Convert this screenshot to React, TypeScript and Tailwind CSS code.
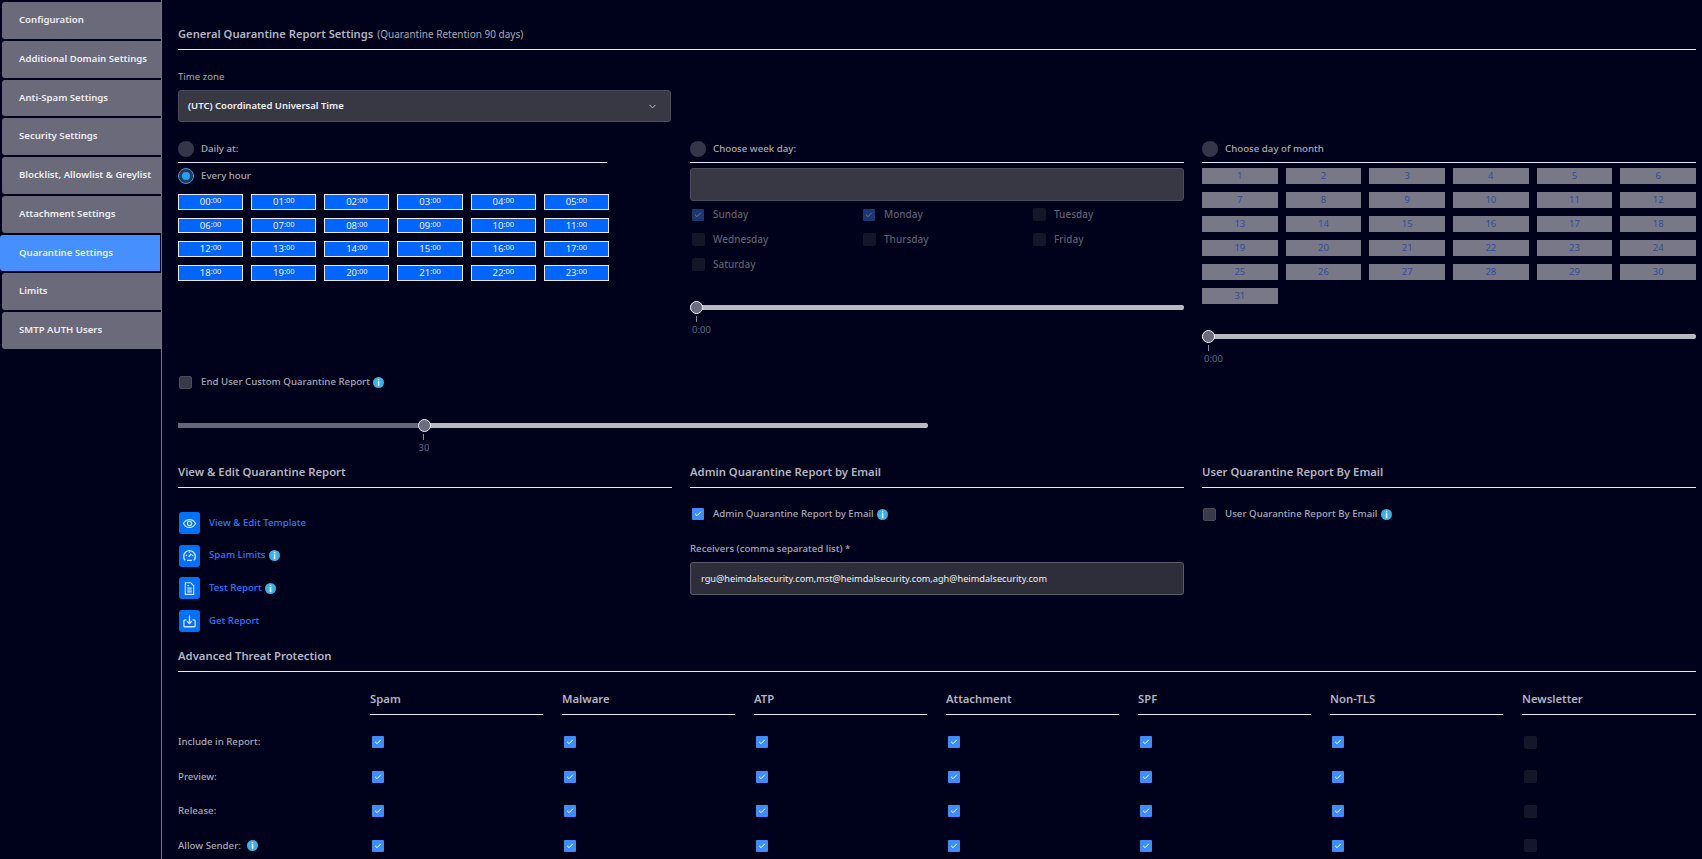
import { Check, ChevronDown } from "lucide-react";
import type { ReactNode } from "react";

const NAV = [
  "Configuration",
  "Additional Domain Settings",
  "Anti-Spam Settings",
  "Security Settings",
  "Blocklist, Allowlist & Greylist",
  "Attachment Settings",
  "Quarantine Settings",
  "Limits",
  "SMTP AUTH Users",
];

const HOURS = Array.from({ length: 24 }, (_, i) => String(i).padStart(2, "0"));
const DAYS = Array.from({ length: 31 }, (_, i) => i + 1);
const WEEK = [
  { name: "Sunday", on: true },
  { name: "Monday", on: true },
  { name: "Tuesday", on: false },
  { name: "Wednesday", on: false },
  { name: "Thursday", on: false },
  { name: "Friday", on: false },
  { name: "Saturday", on: false },
];
const COLUMNS = ["Spam", "Malware", "ATP", "Attachment", "SPF", "Non-TLS", "Newsletter"];
const ROWS = ["Include in Report:", "Preview:", "Release:", "Allow Sender:"];

function Info() {
  return (
    <svg viewBox="0 0 11 11" className="w-[11px] h-[11px] shrink-0">
      <circle cx="5.5" cy="5.5" r="5.5" fill="#3bb2e2" />
      <rect x="4.8" y="1.8" width="1.5" height="1.5" fill="#fff" />
      <rect x="4.8" y="4.2" width="1.5" height="5" fill="#fff" />
    </svg>
  );
}

function Heading({ children }: { children: ReactNode }) {
  return (
    <div className="h-[33px] flex items-end pb-[6px] border-b border-[#e8e8ee] text-[11.3px] leading-[18px] font-semibold text-[#b4b4c0]">
      {children}
    </div>
  );
}

function Radio({ on }: { on?: boolean }) {
  if (on) {
    return (
      <span className="w-[16px] h-[16px] rounded-full border border-[#2a9df4] bg-[#33334a] flex items-center justify-center">
        <span className="w-[8px] h-[8px] rounded-full bg-[#20a0ff]" />
      </span>
    );
  }
  return <span className="w-[16px] h-[16px] rounded-full bg-[#36364a]" />;
}

function RadioHead({ label, on }: { label: string; on?: boolean }) {
  return (
    <div className="flex items-center h-[16px]">
      <Radio on={on} />
      <span className="ml-[7px] text-[9.7px] font-medium text-[#a9a9b6]">{label}</span>
    </div>
  );
}

function Box({ kind }: { kind: "on" | "off" | "dimOn" | "dimOff" }) {
  if (kind === "on") {
    return (
      <span className="w-[12px] h-[12px] rounded-[1px] bg-[#3f8cff] flex items-center justify-center">
        <Check className="w-[8px] h-[8px] text-white" strokeWidth={3} />
      </span>
    );
  }
  if (kind === "dimOn") {
    return (
      <span className="w-[12px] h-[12px] rounded-[1px] bg-[#1c3672] flex items-center justify-center">
        <Check className="w-[8px] h-[8px] text-[#7c86a0]" strokeWidth={2.5} />
      </span>
    );
  }
  if (kind === "dimOff") {
    return <span className="block w-[13px] h-[13px] rounded-[2px] bg-[#14162a]" />;
  }
  return <span className="block w-[13px] h-[13px] rounded-[2px] bg-[#3a3a4a] border border-[#4a4a5a]" />;
}

function Slider({ percent, label }: { percent: number; label: string }) {
  return (
    <div>
      <div className="relative h-[14px] flex items-center">
        <div className="w-full h-[5px] rounded-[2px] bg-[#b9b9c2]" />
        {percent > 0 && (
          <div className="absolute left-0 h-[5px] bg-[#64647a]" style={{ width: `${percent}%` }} />
        )}
        <div
          className="absolute top-[1px] w-[13px] h-[13px] rounded-full bg-[#6c6c80] border border-[#f0f0f4]"
          style={percent > 0 ? { left: `calc(${percent}% - 6px)` } : { left: 0 }}
        />
      </div>
      <div
        style={percent > 0 ? { marginLeft: `calc(${percent}% - 7px)` } : undefined}
        className={percent > 0 ? "w-[14px] flex flex-col items-center" : "w-[14px] flex flex-col items-start"}
      >
        <span className={`mt-[2px] w-px h-[6px] bg-[#8a8a96] ${percent > 0 ? "" : "ml-[6px]"}`} />
        <span className={`mt-[1px] text-[9.5px] leading-[14px] text-[#5d6888] whitespace-nowrap ${percent > 0 ? "" : "ml-[2px]"}`}>
          {label}
        </span>
      </div>
    </div>
  );
}

function LinkRow({ icon, label, info }: { icon: ReactNode; label: string; info?: boolean }) {
  return (
    <div className="flex items-center h-[22px] ml-[1px]">
      <span className="w-[21px] h-[22px] rounded-[3px] bg-[#0070ff] flex items-center justify-center text-[#d4e5ff]">{icon}</span>
      <span className="ml-[9px] mr-[3px] text-[9.7px] font-medium text-[#2f7bff]">{label}</span>
      {info && <Info />}
    </div>
  );
}

export default function App() {
  return (
    <div className="flex h-[859px] overflow-hidden bg-[#00011a] font-['Noto_Sans',sans-serif]">
      {/* sidebar */}
      <div className="w-[162px] shrink-0 border-r border-[#3f7fe0] pt-[2px] flex flex-col gap-[2px]">
        {NAV.map((item) => {
          const active = item === "Quarantine Settings";
          return (
            <div
              key={item}
              className={`h-[36.75px] flex items-center text-[9.6px] font-semibold text-[#eeeef4] rounded-l-[3px] ${
                active ? "bg-[#458fff] pl-[19px] mr-[1px]" : "bg-[#6a6a7a] ml-[2px] pl-[17px]"
              }`}
            >
              {item}
            </div>
          );
        })}
      </div>

      {/* content */}
      <div className="flex-1 pl-[16px] pr-[6px]">
        <div className="h-[50px] flex items-end pb-[6px] border-b border-[#e8e8ee] leading-[18px] text-[11.2px] font-semibold text-[#b4b4c0]">
          General Quarantine Report Settings
          <span className="ml-[4px] text-[10px] font-normal text-[#a9a9b6]">(Quarantine Retention 90 days)</span>
        </div>

        <div className="mt-[19px] text-[9.6px] leading-[16px] text-[#a9a9b6]">Time zone</div>
        <div className="mt-[5px] w-[493px] h-[32px] rounded-[3px] bg-[#383844] border border-[#4c4c5a] flex items-center justify-between pl-[9px] pr-[12px] text-[9.5px] font-semibold text-[#f0f0f4]">
          (UTC) Coordinated Universal Time
          <ChevronDown className="w-[11px] h-[11px] text-[#c8c8d0]" />
        </div>

        {/* schedule */}
        <div className="mt-[19px] grid grid-cols-3 gap-x-[18px] h-[226px]">
          <div className="w-[431px]">
            <div className="pb-[5px] border-b border-[#e8e8ee] w-[429px]">
              <RadioHead label="Daily at:" />
            </div>
            <div className="mt-[5px]">
              <RadioHead label="Every hour" on />
            </div>
            <div className="mt-[10px] grid grid-cols-6 gap-x-[8px] gap-y-[8px]">
              {HOURS.map((h) => (
                <div
                  key={h}
                  className="h-[15.7px] bg-[#0066ff] border border-[#e8e8ee] flex items-start justify-center text-[9.5px] leading-[14px] text-[#f0f0f6]"
                >
                  {h}
                  <span className="text-[7.5px] leading-[11px]">:00</span>
                </div>
              ))}
            </div>
          </div>

          <div>
            <div className="pb-[5px] border-b border-[#e8e8ee]">
              <RadioHead label="Choose week day:" />
            </div>
            <div className="mt-[5px] h-[33px] rounded-[3px] bg-[#383844] border border-[#4c4c5a]" />
            <div className="mt-[1px] grid grid-cols-[171px_170px_1fr] pl-[2px]">
              {WEEK.map((d) => (
                <div key={d.name} className="h-[25px] flex items-center">
                  <span className="w-[21px]">
                    <Box kind={d.on ? "dimOn" : "dimOff"} />
                  </span>
                  <span className="text-[10px] font-medium text-[#5f5f6e]">{d.name}</span>
                </div>
              ))}
            </div>
            <div className="mt-[23px]">
              <Slider percent={0} label="0:00" />
            </div>
          </div>

          <div>
            <div className="pb-[5px] border-b border-[#e8e8ee]">
              <RadioHead label="Choose day of month" />
            </div>
            <div className="mt-[5px] grid grid-cols-6 gap-x-[8px] gap-y-[8px]">
              {DAYS.map((d) => (
                <div key={d} className="h-[16px] bg-[#787886] flex items-center justify-center text-[9.5px] text-[#2e4f9c]">
                  {d}
                </div>
              ))}
            </div>
            <div className="mt-[25px]">
              <Slider percent={0} label="0:00" />
            </div>
          </div>
        </div>

        <div className="mt-[8px] h-[14px] flex items-center">
          <span className="ml-[1px] w-[22px]">
            <Box kind="off" />
          </span>
          <span className="text-[9.7px] font-medium text-[#a9a9b6] mr-[3px]">End User Custom Quarantine Report</span>
          <Info />
        </div>

        <div className="mt-[29px] w-[750px]">
          <Slider percent={32.8} label="30" />
        </div>

        {/* report options */}
        <div className="grid grid-cols-3 gap-x-[18px]">
          <div>
            <Heading>View &amp; Edit Quarantine Report</Heading>
            <div className="mt-[24px] flex flex-col gap-[10.7px]">
              <LinkRow
                icon={
                  <svg viewBox="0 0 16 16" className="w-[15px] h-[15px]" fill="none" stroke="currentColor" strokeWidth="1.3">
                    <path d="M1.5 8C3 5.2 5.3 3.8 8 3.8s5 1.4 6.5 4.2c-1.5 2.8-3.8 4.2-6.5 4.2S3 10.8 1.5 8Z" />
                    <circle cx="8" cy="8" r="2.2" />
                  </svg>
                }
                label="View & Edit Template"
              />
              <LinkRow
                icon={
                  <svg viewBox="0 0 16 16" className="w-[15px] h-[15px]" fill="none" stroke="currentColor" strokeWidth="1.5">
                    <path d="M3.4 13.2A6.2 6.2 0 1 1 12.6 13.2" />
                    <path d="M4 8h1.4M10.6 8H12M8 3.8v1.3M5.4 13.2h5.2" />
                    <path d="M7.2 9.4 10 6.2" strokeWidth="1.7" />
                  </svg>
                }
                label="Spam Limits"
                info
              />
              <LinkRow
                icon={
                  <svg viewBox="0 0 16 16" className="w-[15px] h-[15px]" fill="none" stroke="currentColor" strokeWidth="1.2">
                    <path d="M3.5 1.8h5.7l3.3 3.3v9.1h-9Z" />
                    <path d="M5.5 5h2M5.5 7.6h5M5.5 9.6h5M5.5 11.6h5" />
                  </svg>
                }
                label="Test Report"
                info
              />
              <LinkRow
                icon={
                  <svg viewBox="0 0 16 16" className="w-[15px] h-[15px]" fill="none" stroke="currentColor" strokeWidth="1.4">
                    <path d="M8 1.5v8.5M5.5 7.8 8 10.3l2.5-2.5M4.8 6.2H3.2a1.2 1.2 0 0 0-1.2 1.2v5a1.2 1.2 0 0 0 1.2 1.2h9.6a1.2 1.2 0 0 0 1.2-1.2v-5a1.2 1.2 0 0 0-1.2-1.2h-1.6" />
                  </svg>
                }
                label="Get Report"
              />
            </div>
          </div>

          <div>
            <Heading>Admin Quarantine Report by Email</Heading>
            <div className="mt-[19px] h-[14px] flex items-center pl-[2px]">
              <span className="w-[21px]">
                <Box kind="on" />
              </span>
              <span className="text-[9.7px] font-medium text-[#a9a9b6] mr-[3px]">Admin Quarantine Report by Email</span>
              <Info />
            </div>
            <div className="mt-[20px] text-[9.7px] font-medium leading-[16px] text-[#a9a9b6]">Receivers (comma separated list) *</div>
            <div className="mt-[5px] h-[33px] rounded-[3px] bg-[#2e2e3a] border border-[#5a5a68] flex items-center pl-[10px] text-[9.2px] text-[#f0f0f4]">
              rgu@heimdalsecurity.com,mst@heimdalsecurity.com,agh@heimdalsecurity.com
            </div>
          </div>

          <div>
            <Heading>User Quarantine Report By Email</Heading>
            <div className="mt-[19px] h-[14px] flex items-center pl-[1px]">
              <span className="w-[22px]">
                <Box kind="off" />
              </span>
              <span className="text-[9.7px] font-medium text-[#a9a9b6] mr-[3px]">User Quarantine Report By Email</span>
              <Info />
            </div>
          </div>
        </div>

        {/* advanced threat protection */}
        <div className="mt-[7px]">
          <Heading>Advanced Threat Protection</Heading>
        </div>
        <div className="grid grid-cols-[173px_repeat(6,173px)_174px] gap-x-[19px]">
          <div />
          {COLUMNS.map((c) => (
            <div key={c} className="h-[43px] flex items-end pb-[6px] border-b border-[#e8e8ee] text-[11.3px] leading-[18px] font-semibold text-[#b4b4c0]">
              {c}
            </div>
          ))}
        </div>
        <div className="mt-[10px] grid grid-cols-[173px_repeat(6,173px)_174px] gap-x-[19px] auto-rows-[34.5px] items-center">
          {ROWS.map((row) => (
            <div key={row} className="contents">
              <div className="flex items-center text-[9.7px] font-medium text-[#a9a9b6]">
                <span className="mr-[6px]">{row}</span>
                {row === "Allow Sender:" && <Info />}
              </div>
              {COLUMNS.map((c) => (
                <div key={c} className="flex items-center pl-[2px]">
                  <Box kind={c === "Newsletter" ? "dimOff" : "on"} />
                </div>
              ))}
            </div>
          ))}
        </div>
      </div>
    </div>
  );
}
